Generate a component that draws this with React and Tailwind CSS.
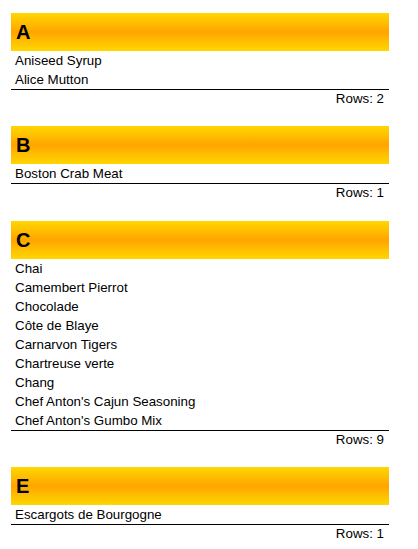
import React from "react";

const groups = [
  { letter: "A", items: ["Aniseed Syrup", "Alice Mutton"] },
  { letter: "B", items: ["Boston Crab Meat"] },
  {
    letter: "C",
    items: [
      "Chai",
      "Camembert Pierrot",
      "Chocolade",
      "Côte de Blaye",
      "Carnarvon Tigers",
      "Chartreuse verte",
      "Chang",
      "Chef Anton's Cajun Seasoning",
      "Chef Anton's Gumbo Mix",
    ],
  },
  { letter: "E", items: ["Escargots de Bourgogne"] },
];

const Group = ({ letter, items }) => {
  return (
    <div className="mb-[18.33px]">
      <div className="h-[38px] flex items-center pl-[5px] bg-linear-to-b from-[#FFD700] via-[#FFA500] to-[#FFD700]">
        <h2 className="text-[20px] font-bold text-black leading-none">{letter}</h2>
      </div>
      <div>
        {items.map((item) => (
          <div key={item} className="h-[19px] leading-[19px] pl-[4px] text-[13.33px] text-black">
            {item}
          </div>
        ))}
      </div>
      <div className="border-t border-black text-right pr-[5px] text-[13.33px] leading-[18px] text-black">
        Rows: {items.length}
      </div>
    </div>
  );
};

export default function App() {
  return (
    <div className="w-[418px] min-h-[549px] bg-white pt-[13px] pl-[11px] font-['Liberation_Sans',Arial,sans-serif]">
      <div className="w-[378px]">
        {groups.map((g) => (
          <Group key={g.letter} letter={g.letter} items={g.items} />
        ))}
      </div>
    </div>
  );
}
